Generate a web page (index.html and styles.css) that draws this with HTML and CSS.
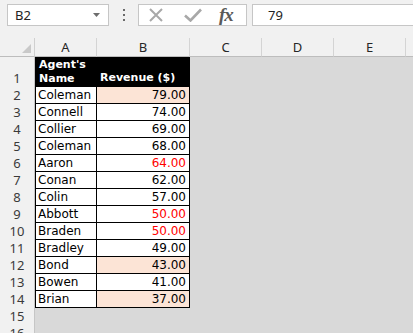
FILE: index.html
```html
<!DOCTYPE html>
<html lang="en">
<head>
    <meta charset="UTF-8">
    <title>Revenue sheet</title>
    <link rel="stylesheet" href="styles.css">
</head>
<body>
    <div class="toolbar">
        <div class="namebox">
            <span>B2</span>
            <svg class="caret" width="7" height="4" viewBox="0 0 7 4"><polygon points="0,0 7,0 3.5,4" fill="#6d6d6d"/></svg>
        </div>
        <svg class="grip" width="3" height="12" viewBox="0 0 3 12">
            <rect x="0" y="0" width="2" height="2" fill="#6a6a6a"/>
            <rect x="0" y="5" width="2" height="2" fill="#6a6a6a"/>
            <rect x="0" y="10" width="2" height="2" fill="#6a6a6a"/>
        </svg>
        <div class="fxbuttons">
            <svg width="16" height="14" viewBox="0 0 16 14"><path d="M2 1 L14 13 M14 1 L2 13" stroke="#a8a8a8" stroke-width="2" fill="none"/></svg>
            <svg width="18" height="14" viewBox="0 0 18 14"><path d="M1 7.5 L6.5 12.5 L17 1.5" stroke="#a8a8a8" stroke-width="2.6" fill="none"/></svg>
            <span class="fx">fx</span>
        </div>
        <div class="formula">79</div>
    </div>

    <div class="sheet">
        <div class="corner"><svg width="9" height="9" viewBox="0 0 9 9"><polygon points="9,0 9,9 0,9" fill="#c9c9c9"/></svg></div>
        <div class="colhead">A</div>
        <div class="colhead">B</div>
        <div class="colhead">C</div>
        <div class="colhead">D</div>
        <div class="colhead">E</div>
        <div class="colhead last"></div>

        <div class="rowhead">1</div>
        <div class="cell name title">Agent's<br>Name</div>
        <div class="cell num title">Revenue ($)</div>

        <div class="rowhead">2</div>
        <div class="cell name">Coleman</div>
        <div class="cell num hot">79.00</div>

        <div class="rowhead">3</div>
        <div class="cell name">Connell</div>
        <div class="cell num">74.00</div>

        <div class="rowhead">4</div>
        <div class="cell name">Collier</div>
        <div class="cell num">69.00</div>

        <div class="rowhead">5</div>
        <div class="cell name">Coleman</div>
        <div class="cell num">68.00</div>

        <div class="rowhead">6</div>
        <div class="cell name">Aaron</div>
        <div class="cell num red">64.00</div>

        <div class="rowhead">7</div>
        <div class="cell name">Conan</div>
        <div class="cell num">62.00</div>

        <div class="rowhead">8</div>
        <div class="cell name">Colin</div>
        <div class="cell num">57.00</div>

        <div class="rowhead">9</div>
        <div class="cell name">Abbott</div>
        <div class="cell num red">50.00</div>

        <div class="rowhead">10</div>
        <div class="cell name">Braden</div>
        <div class="cell num red">50.00</div>

        <div class="rowhead">11</div>
        <div class="cell name">Bradley</div>
        <div class="cell num">49.00</div>

        <div class="rowhead">12</div>
        <div class="cell name">Bond</div>
        <div class="cell num hot">43.00</div>

        <div class="rowhead">13</div>
        <div class="cell name">Bowen</div>
        <div class="cell num">41.00</div>

        <div class="rowhead">14</div>
        <div class="cell name">Brian</div>
        <div class="cell num hot">37.00</div>

        <div class="rowhead">15</div>
        <div class="rowhead">16</div>
    </div>
</body>
</html>
```

FILE: styles.css
```css
body { margin: 0; background: #d9d9d9; font-family: "Noto Sans", sans-serif; color: #222; overflow: hidden; }

.toolbar { display: flex; align-items: center; height: 38px; padding: 0 0 0 7px; background: #f1f1f1; box-sizing: border-box; }
.namebox { display: flex; align-items: center; justify-content: space-between; width: 102px; height: 22px; margin-top: -8px; padding: 0 8px 0 7px; box-sizing: border-box; background: #fff; border: 1px solid #c6c6c6; font-size: 13px; }
.grip { margin: -8px 0 0 14px; }
.fxbuttons { display: flex; align-items: center; gap: 0; width: 109px; height: 22px; margin: -8px 0 0 12px; padding-left: 9px; box-sizing: border-box; background: #fff; border: 1px solid #c6c6c6; }
.fxbuttons svg:nth-child(2) { margin-left: 20px; }
.fx { margin-left: 17px; font-family: "Liberation Serif", serif; font-style: italic; font-weight: bold; font-size: 19px; color: #5a5a5a; letter-spacing: -1px; }
.formula { flex: 1; height: 22px; margin: -8px 0 0 5px; padding-left: 15px; box-sizing: border-box; background: #fff; border: 1px solid #c6c6c6; border-right: none; font-size: 13px; line-height: 20px; }

.sheet { display: grid; grid-template-columns: 35px 62px 93px 72px 72px 72px 1fr; grid-template-rows: 19px 30px; grid-auto-rows: 17px; }
.corner { display: flex; align-items: flex-end; justify-content: flex-end; padding: 0 3px 3px 0; background: #f1f1f1; border-right: 1px solid #d0d0d0; border-bottom: 1px solid #bdbdbd; box-sizing: border-box; }
.colhead { display: flex; align-items: center; justify-content: center; background: #f1f1f1; border-right: 1px solid #d4d4d4; border-bottom: 1px solid #bdbdbd; box-sizing: border-box; font-size: 13px; color: #262626; }
.colhead.last { border-right: none; }

.rowhead { grid-column: 1; display: flex; align-items: flex-end; justify-content: center; background: #f1f1f1; border-right: 1px solid #c6c6c6; box-sizing: border-box; font-size: 13px; line-height: 17px; color: #3a3a3a; }

.cell { display: flex; align-items: flex-end; background: #fff; border-right: 1px solid #000; border-bottom: 1px solid #000; box-sizing: border-box; font-family: "DejaVu Sans", sans-serif; font-size: 12px; line-height: 16px; color: #000; white-space: nowrap; }
.name { grid-column: 2; border-left: 1px solid #000; padding-left: 2px; }
.num { grid-column: 3; justify-content: flex-end; padding-right: 3px; }
.title { background: #000; color: #fff; font-weight: bold; font-size: 11px; line-height: 14px; padding-bottom: 1px; }
.name.title { display: block; padding-top: 1px; padding-left: 3px; }
.num.title { justify-content: flex-start; padding-left: 3px; }
.hot { background: #fce4d6; }
.red { color: #ff0000; }
```
